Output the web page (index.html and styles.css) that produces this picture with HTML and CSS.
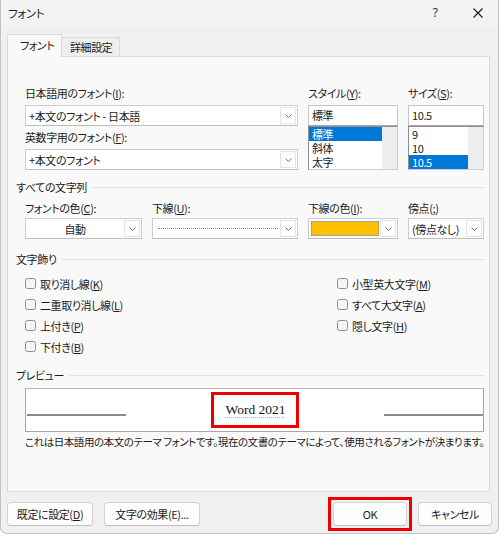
FILE: index.html
```html
<!DOCTYPE html>
<html lang="ja">
<head>
<meta charset="utf-8">
<title>フォント</title>
<link rel="stylesheet" href="styles.css">
</head>
<body>
<div class="window">
  <div class="titlebar">
    <span class="title">フォント</span>
    <span class="help">?</span>
    <span class="close"><svg width="10" height="10" viewBox="0 0 10 10"><path d="M0.5 0.5 L9.5 9.5 M9.5 0.5 L0.5 9.5" stroke="#1a1a1a" stroke-width="1.1" fill="none"/></svg></span>
  </div>
  <div class="tabs">
    <div class="tab active">フォント</div>
    <div class="tab">詳細設定</div>
  </div>
  <div class="panel">
    <div class="grid top">
      <div class="col span2">
        <div class="label">日本語用のフォント(<u>I</u>):</div>
        <div class="combo">
          <div class="ctext">+本文のフォント - 日本語</div>
          <div class="arrow"><svg width="7" height="4" viewBox="0 0 7 4"><polyline points="0.5,0.5 3.5,3.5 6.5,0.5" fill="none" stroke="#707070" stroke-width="1"/></svg></div>
        </div>
        <div class="label second">英数字用のフォント(<u>F</u>):</div>
        <div class="combo">
          <div class="ctext">+本文のフォント</div>
          <div class="arrow"><svg width="7" height="4" viewBox="0 0 7 4"><polyline points="0.5,0.5 3.5,3.5 6.5,0.5" fill="none" stroke="#707070" stroke-width="1"/></svg></div>
        </div>
      </div>
      <div class="col">
        <div class="label">スタイル(<u>Y</u>):</div>
        <div class="textbox">標準</div>
        <div class="list">
          <div class="items">
            <div class="item sel">標準</div>
            <div class="item">斜体</div>
            <div class="item">太字</div>
          </div>
          <div class="scroll"></div>
        </div>
      </div>
      <div class="col">
        <div class="label">サイズ(<u>S</u>):</div>
        <div class="textbox">10.5</div>
        <div class="list">
          <div class="items">
            <div class="item">9</div>
            <div class="item">10</div>
            <div class="item sel">10.5</div>
          </div>
          <div class="scroll"></div>
        </div>
      </div>
    </div>

    <div class="heading h1">すべての文字列</div>

    <div class="grid row2">
      <div class="col">
        <div class="label">フォントの色(<u>C</u>):</div>
        <div class="combo">
          <div class="ctext center">自動</div>
          <div class="arrow"><svg width="7" height="4" viewBox="0 0 7 4"><polyline points="0.5,0.5 3.5,3.5 6.5,0.5" fill="none" stroke="#707070" stroke-width="1"/></svg></div>
        </div>
      </div>
      <div class="col">
        <div class="label">下線(<u>U</u>):</div>
        <div class="combo">
          <div class="ctext"><div class="dots"></div></div>
          <div class="arrow"><svg width="7" height="4" viewBox="0 0 7 4"><polyline points="0.5,0.5 3.5,3.5 6.5,0.5" fill="none" stroke="#707070" stroke-width="1"/></svg></div>
        </div>
      </div>
      <div class="col">
        <div class="label">下線の色(<u>I</u>):</div>
        <div class="combo">
          <div class="ctext"><div class="swatch"></div></div>
          <div class="arrow"><svg width="7" height="4" viewBox="0 0 7 4"><polyline points="0.5,0.5 3.5,3.5 6.5,0.5" fill="none" stroke="#707070" stroke-width="1"/></svg></div>
        </div>
      </div>
      <div class="col">
        <div class="label">傍点(<u>;</u>)</div>
        <div class="combo">
          <div class="ctext">(傍点なし)</div>
          <div class="arrow"><svg width="7" height="4" viewBox="0 0 7 4"><polyline points="0.5,0.5 3.5,3.5 6.5,0.5" fill="none" stroke="#707070" stroke-width="1"/></svg></div>
        </div>
      </div>
    </div>

    <div class="heading h2">文字飾り</div>

    <div class="checks">
      <div class="check"><span class="box"></span>取り消し線(<u>K</u>)</div>
      <div class="check"><span class="box"></span>二重取り消し線(<u>L</u>)</div>
      <div class="check"><span class="box"></span>上付き(<u>P</u>)</div>
      <div class="check"><span class="box"></span>下付き(<u>B</u>)</div>
      <div class="check"><span class="box"></span>小型英大文字(<u>M</u>)</div>
      <div class="check"><span class="box"></span>すべて大文字(<u>A</u>)</div>
      <div class="check"><span class="box"></span>隠し文字(<u>H</u>)</div>
    </div>

    <div class="heading h3">プレビュー</div>

    <div class="preview">
      <div class="pline left"></div>
      <div class="sample"><span class="word">Word 2021</span></div>
      <div class="pline right"></div>
    </div>
    <div class="desc">これは日本語用の本文のテーマ フォントです。現在の文書のテーマによって、使用されるフォントが決まります。</div>
  </div>
  <div class="footer">
    <div class="btn b1">既定に設定(<u>D</u>)</div>
    <div class="btn b2">文字の効果(E)...</div>
    <div class="spacer"></div>
    <div class="okmark"><div class="btn ok">OK</div></div>
    <div class="btn cancel">キャンセル</div>
  </div>
</div>
</body>
</html>
```

FILE: styles.css
```css
* { box-sizing: border-box; }
html, body { margin: 0; padding: 0; }
body {
  width: 500px;
  height: 534px;
  overflow: hidden;
  background: #ffffff;
  font-family: "Noto Sans CJK JP", "Noto Sans", sans-serif;
  font-size: 11px;
  letter-spacing: -0.4px;
  color: #1b1b1b;
  font-feature-settings: "palt";
}
u { text-decoration-thickness: 1px; text-underline-offset: 1px; }

.window {
  width: 499px;
  height: 534px;
  background: #f0f0f0;
  border: 1px solid #c2c2c2;
  border-top: none;
  border-radius: 0 0 7px 7px;
  overflow: hidden;
}

.titlebar {
  height: 26px;
  display: flex;
  align-items: center;
  background: #f3f3f3;
}
.title { flex: 1; padding-left: 7px; font-size: 11.5px; line-height: 14px; }
.help { font-size: 12px; line-height: 14px; margin-right: 35px; color: #333; font-family: "Noto Sans", sans-serif; letter-spacing: 0; }
.close { display: flex; margin-right: 15px; }

.tabs {
  height: 30px;
  display: flex;
  align-items: flex-end;
  padding-left: 6px;
}
.tab {
  height: 19px;
  width: 58px;
  padding-left: 8px;
  line-height: 18px;
  background: #eeeeee;
  border: 1px solid #dadada;
  border-left: none;
  border-bottom: none;
  color: #1b1b1b;
}
.tab.active {
  width: 55px;
  height: 23px;
  padding-left: 12px;
  line-height: 21px;
  background: #f9f9f9;
  border-left: 1px solid #dadada;
  margin-bottom: -1px;
  position: relative;
  z-index: 1;
}

.panel {
  margin-left: 6px;
  width: 483px;
  height: 436px;
  background: #f9f9f9;
  border: 1px solid #dadada;
  padding: 29px 0 0 17px;
}

.grid {
  display: grid;
  grid-template-columns: 117px 146px 90px 76px;
  column-gap: 10px;
}
.col { display: flex; flex-direction: column; }
.span2 { grid-column: 1 / 3; }

.label { height: 14px; line-height: 14px; margin-bottom: 5px; white-space: nowrap; }
.label.second { margin-top: 4px; }
.row2 .label { margin-bottom: 3px; }

.combo {
  height: 21px;
  display: flex;
  background: #ffffff;
  border: 1px solid #cdcdcd;
  border-bottom-color: #bdbdbd;
}
.ctext {
  flex: 1;
  display: flex;
  align-items: center;
  padding-left: 3px;
  line-height: 14px;
  white-space: nowrap;
  overflow: hidden;
}
.ctext.center { justify-content: center; padding-left: 0; }
.arrow {
  width: 16px;
  margin: 1px 1px 1px 0;
  border: 1px solid #e3e3e3;
  display: flex;
  align-items: center;
  justify-content: center;
  background: #fdfdfd;
}
.dots {
  flex: 1;
  margin: 0 2px 0 2px;
  border-top: 1px dotted #8a8a8a;
}
.swatch {
  flex: 1;
  height: 15px;
  margin-left: -1px;
  margin-right: 1px;
  background: #ffc000;
  border: 1px dotted #8a8a8a;
}

.textbox {
  height: 21px;
  line-height: 19px;
  padding-left: 3px;
  background: #ffffff;
  border: 1px solid #c6c6c6;
  border-bottom-color: #a8a8a8;
}
.list {
  height: 44px;
  display: flex;
  background: #ffffff;
  border: 1px solid #cdcdcd;
  border-top-color: #8e8e8e;
  border-left-color: #8e8e8e;
}
.items { flex: 1; }
.item { height: 14px; line-height: 14px; padding-left: 3px; overflow: hidden; }
.item.sel { background: #0078d7; color: #ffffff; }
.scroll { width: 15px; background: #eeeeee; }

.heading {
  display: flex;
  align-items: center;
  height: 14px;
  line-height: 14px;
  margin-left: -9px;
  width: 468px;
  white-space: nowrap;
}
.heading::after {
  content: "";
  flex: 1;
  height: 1px;
  background: #e2e2e2;
  margin-left: 5px;
}
.h1 { margin-top: 10px; }
.row2 { margin-top: 7px; }
.h2 { margin-top: 13px; }
.h3 { margin-top: 11px; }

.checks {
  margin-top: 7px;
  display: grid;
  grid-template-columns: 312px auto;
  grid-template-rows: repeat(4, 21px);
  grid-auto-flow: column;
}
.check { display: flex; align-items: center; white-space: nowrap; line-height: 14px; }
.box {
  width: 11px;
  height: 11px;
  border: 1px solid #8c8c8c;
  border-radius: 2.5px;
  background: #f6f6f6;
  margin-right: 4px;
}

.preview {
  margin-top: 6px;
  width: 459px;
  height: 44px;
  background: #ffffff;
  border: 1px solid #a6a6a6;
  border-top-color: #b8b8b8;
  display: flex;
  align-items: center;
  justify-content: space-between;
}
.pline { height: 2px; background: #8a8a8a; margin-top: 10px; }
.pline.left { width: 99px; margin-left: 1px; }
.pline.right { width: 99px; }
.sample {
  height: 36px;
  border: 3px solid #ee0000;
  padding: 0 10px 0 11px;
  display: flex;
  align-items: center;
}
.word {
  font-family: "Liberation Serif", serif;
  font-size: 13.5px;
  letter-spacing: 0;
  color: #111;
  text-decoration: underline dotted #f0b400;
  text-decoration-thickness: 1px;
  text-underline-offset: 3px;
  font-feature-settings: normal;
}
.desc {
  margin-top: 3px;
  height: 14px;
  line-height: 14px;
  font-size: 10.5px;
  letter-spacing: -0.45px;
  white-space: nowrap;
}

.footer {
  margin-top: 10px;
  display: flex;
  padding: 0 6px;
}
.btn {
  height: 24px;
  line-height: 22px;
  text-align: center;
  background: #fdfdfd;
  border: 1px solid #d2d2d2;
  border-bottom-color: #bfbfbf;
  border-radius: 4px;
  white-space: nowrap;
}
.b1 { width: 86px; }
.b2 { width: 96px; margin-left: 11px; }
.spacer { flex: 1; }
.okmark {
  margin: -5px;
  padding: 2px;
  border: 3px solid #ee0000;
}
.ok { width: 74px; }
.cancel { width: 74px; margin-left: 11px; }
```
